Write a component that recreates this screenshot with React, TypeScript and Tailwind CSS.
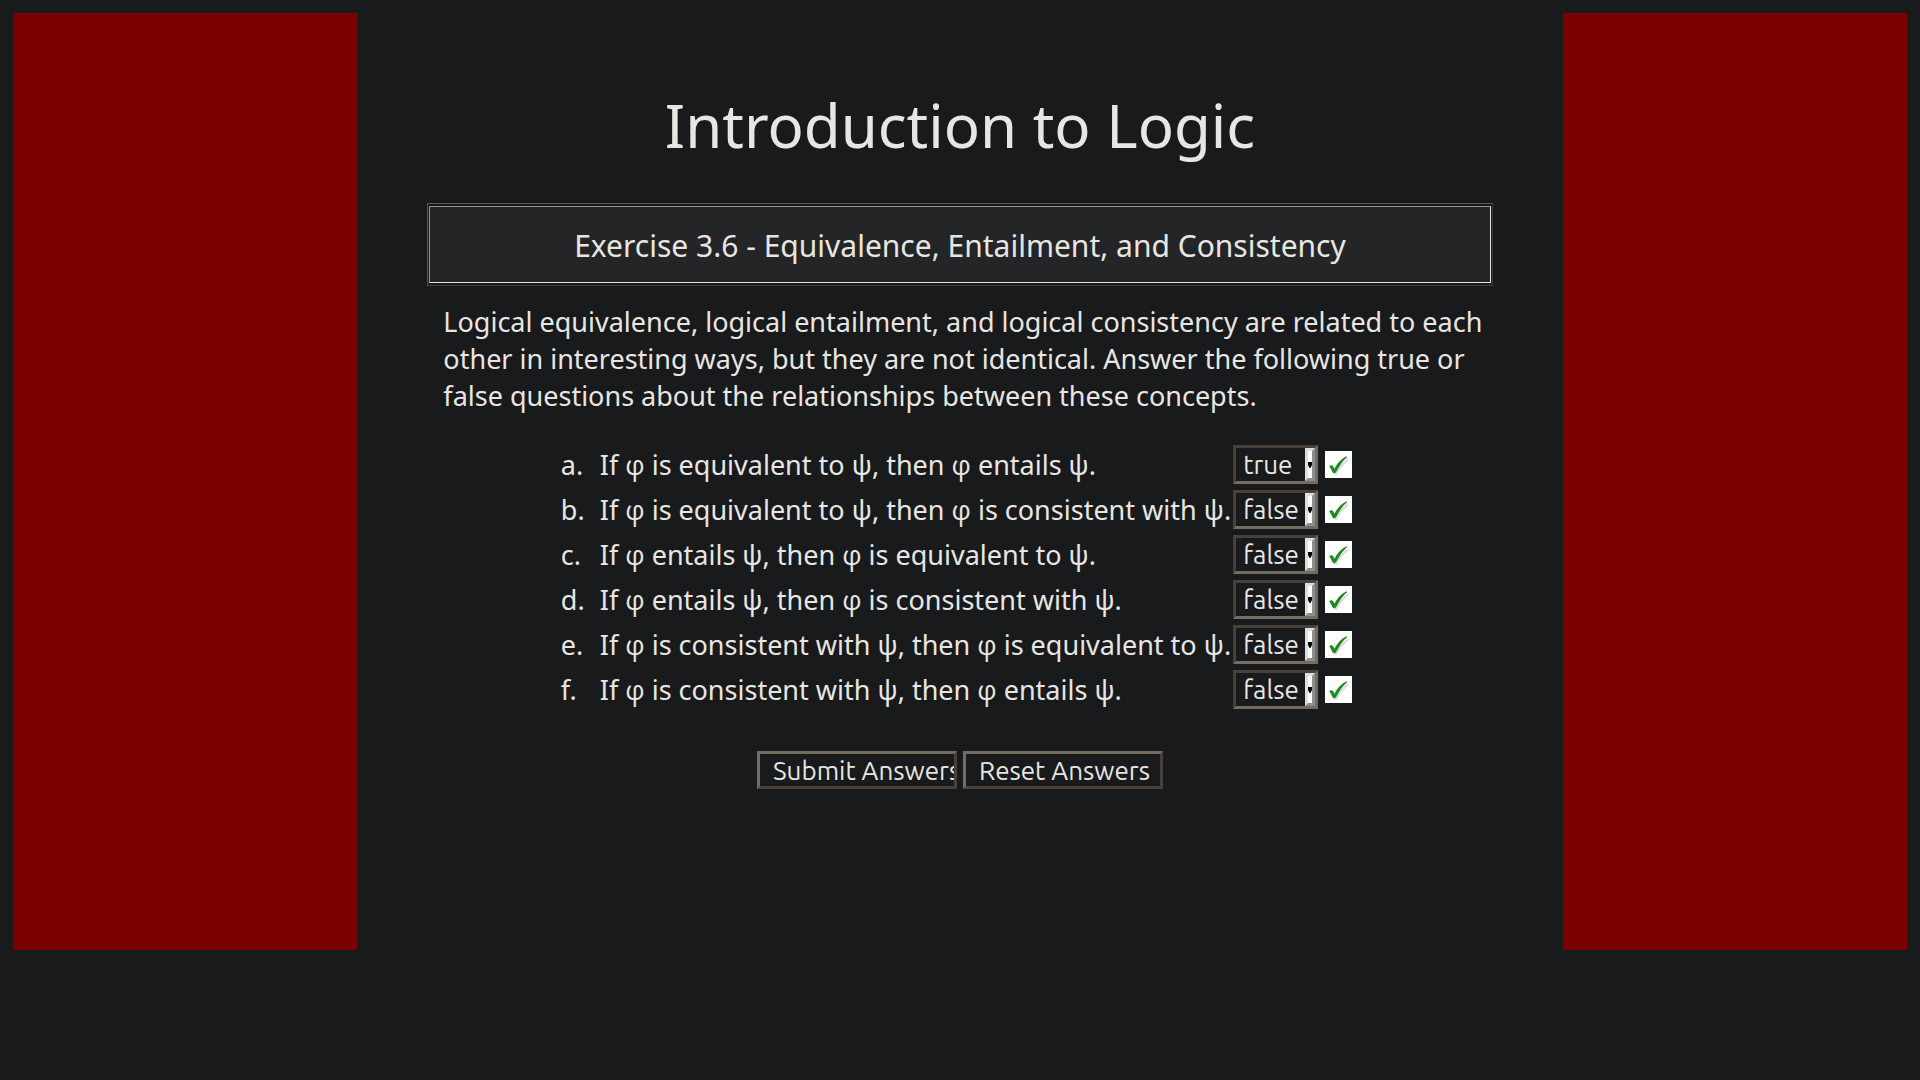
import { Fragment, useState } from "react";

const questions = [
  { id: "a", text: "If φ is equivalent to ψ, then φ entails ψ.", answer: "true" },
  { id: "b", text: "If φ is equivalent to ψ, then φ is consistent with ψ.", answer: "false" },
  { id: "c", text: "If φ entails ψ, then φ is equivalent to ψ.", answer: "false" },
  { id: "d", text: "If φ entails ψ, then φ is consistent with ψ.", answer: "false" },
  { id: "e", text: "If φ is consistent with ψ, then φ is equivalent to ψ.", answer: "false" },
  { id: "f", text: "If φ is consistent with ψ, then φ entails ψ.", answer: "false" },
];

/* Open Sans has the looped form of phi; Noto Sans draws the stroked one. */
function Formula({ text }: { text: string }) {
  return (
    <>
      {text.split("φ").map((part, i) => (
        <Fragment key={i}>
          {i > 0 && <span className="font-['Open_Sans',sans-serif]">φ</span>}
          {part}
        </Fragment>
      ))}
    </>
  );
}

function CheckMark() {
  return (
    <svg viewBox="0 0 27 27" className="block size-[27px] bg-white" role="img" aria-label="Correct">
      <path d="M8 22 C12 17 16 12 23 7.5 L23 10 C18 14 14 19 12.5 23 C11 24.5 9.5 24 8 22 Z" fill="#e3d9e3" />
      <path
        d="M4.3 15.2 C5.5 13.8 7.6 14.2 8.4 15.8 L9.4 17.8 C12 12.5 16 7.8 21.6 5.2 L22 6.2 C17.5 10 14.2 15 11.3 20.8 C10.3 22.7 8.2 22.8 7.3 20.8 C6.4 18.6 5.5 17 4.3 15.2 Z"
        fill="#1d8a1d"
      />
    </svg>
  );
}

function AnswerSelect({ id, value, onChange }: { id: string; value: string; onChange: (v: string) => void }) {
  return (
    <div className="relative w-[85px]">
      <select
        id={id}
        value={value}
        onChange={(e) => onChange(e.target.value)}
        className="block h-[39px] w-full appearance-none border-3 border-t-[#494139] border-r-[#756b5e] border-b-[#756b5e] border-l-[#494139] bg-[#181a1b] pl-[7px] font-['Ubuntu','Noto_Sans',sans-serif] text-[26px] leading-[33px] text-[#e8e6e3]"
      >
        <option value="true">true</option>
        <option value="false">false</option>
      </select>
      <span className="pointer-events-none absolute inset-y-[3px] right-[3px] flex w-[10px] items-center justify-end overflow-hidden border-3 border-t-[#dedede] border-r-[#8d8d8d] border-b-[#8d8d8d] border-l-[#dedede] bg-white">
        <svg viewBox="0 0 4 8" className="h-2 w-1 shrink-0" aria-hidden="true">
          <path d="M0 1 H4 V4 L2.5 7 H1.5 L0 4 Z" fill="#000" />
        </svg>
      </span>
    </div>
  );
}

const buttonClass =
  "h-[38px] w-[200px] overflow-hidden border-3 border-t-[#756b5e] border-r-[#494139] border-b-[#494139] border-l-[#756b5e] px-[13px] pt-[2px] text-left font-['Ubuntu','Noto_Sans',sans-serif] text-[26px] leading-[30px] whitespace-nowrap";

export default function App() {
  const [answers, setAnswers] = useState<Record<string, string>>(
    Object.fromEntries(questions.map((q) => [q.id, q.answer])),
  );

  return (
    <div className="min-h-screen bg-[#181a1b] p-[13px] font-['Noto_Sans',sans-serif] text-[27px] leading-[37px] text-[#e8e6e3]">
      <div className="grid grid-cols-[2fr_7fr_2fr]">
        <div className="bg-[#7a0000]" />
        <main className="px-[70px] pt-[71px] pb-[161px]">
          <h1 className="text-center text-[60px] leading-[82px]">Introduction to Logic</h1>
          <header className="mt-[37px] border border-t-[#545a5e] border-r-[#3b4043] border-b-[#3b4043] border-l-[#545a5e] bg-[#181a1b] px-px py-[2px]">
            <h2 className="border border-t-[#9c9488] border-r-[#e8e6e3] border-b-[#e8e6e3] border-l-[#9c9488] bg-[#232526] pt-[18px] pb-[16px] text-center text-[30px] leading-[41px]">
              Exercise 3.6 - Equivalence, Entailment, and Consistency
            </h2>
          </header>
          <p className="mt-[17px] pr-2 pl-4">
            Logical equivalence, logical entailment, and logical consistency are related to each other in
            interesting ways, but they are not identical. Answer the following true or false questions about the
            relationships between these concepts.
          </p>
          <form onSubmit={(e) => e.preventDefault()}>
            <table className="mx-auto mt-[28px]">
              <tbody>
                {questions.map((q) => (
                  <tr key={q.id} className="h-[45px]">
                    <td className="w-[39px] p-0">{q.id}.</td>
                    <td className="p-0 pr-[2px] whitespace-nowrap">
                      <label htmlFor={`answer-${q.id}`}>
                        <Formula text={q.text} />
                      </label>
                    </td>
                    <td className="p-0 pr-[7px]">
                      <AnswerSelect
                        id={`answer-${q.id}`}
                        value={answers[q.id]}
                        onChange={(v) => setAnswers({ ...answers, [q.id]: v })}
                      />
                    </td>
                    <td className="p-0 pr-[7px]">
                      <CheckMark />
                    </td>
                  </tr>
                ))}
              </tbody>
            </table>
            <div className="mt-[39px] flex justify-center gap-[6px]">
              <button type="submit" className={buttonClass}>
                Submit Answers
              </button>
              <button type="reset" className={buttonClass}>
                Reset Answers
              </button>
            </div>
          </form>
        </main>
        <div className="bg-[#7a0000]" />
      </div>
    </div>
  );
}
